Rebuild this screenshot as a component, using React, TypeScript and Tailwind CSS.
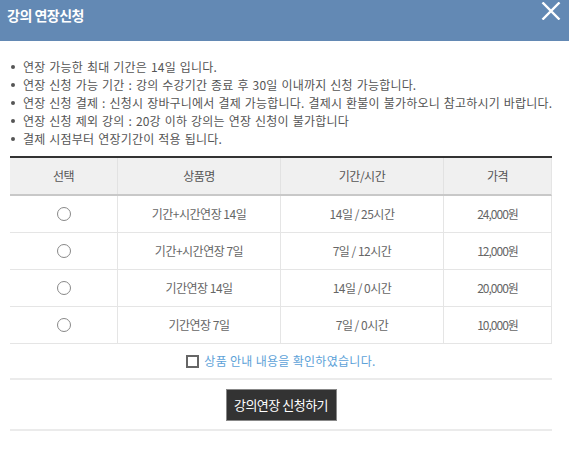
import * as React from "react";

const notices = [
  "연장 가능한 최대 기간은 14일 입니다.",
  "연장 신청 가능 기간 : 강의 수강기간 종료 후 30일 이내까지 신청 가능합니다.",
  "연장 신청 결제 : 신청시 장바구니에서 결제 가능합니다. 결제시 환불이 불가하오니 참고하시기 바랍니다.",
  "연장 신청 제외 강의 : 20강 이하 강의는 연장 신청이 불가합니다",
  "결제 시점부터 연장기간이 적용 됩니다.",
];

const products = [
  { name: "기간+시간연장 14일", period: "14일 / 25시간", price: "24,000원" },
  { name: "기간+시간연장 7일", period: "7일 / 12시간", price: "12,000원" },
  { name: "기간연장 14일", period: "14일 / 0시간", price: "20,000원" },
  { name: "기간연장 7일", period: "7일 / 0시간", price: "10,000원" },
];

const font = { fontFamily: '"Noto Sans CJK KR", "Noto Sans", sans-serif' };

export default function App() {
  const [selected, setSelected] = React.useState<number | null>(null);
  const [agreed, setAgreed] = React.useState(false);

  return (
    <div className="w-[569px] h-[449px] bg-white overflow-hidden" style={font}>
      {/* Title bar */}
      <div className="h-[41px] bg-[#6389b4] flex items-start justify-between pl-[7px] pr-[8px]">
        <h2 className="pt-[5px] text-[14px] leading-[20px] font-bold text-white tracking-[-0.5px]">
          강의 연장신청
        </h2>
        <button className="mt-[2px] w-[20px] h-[18px] text-white">
          <svg viewBox="0 0 20 18" className="w-[20px] h-[18px]" fill="none" stroke="currentColor" strokeWidth="2.4">
            <path d="M1.5 0.5 L18.5 17.5 M18.5 0.5 L1.5 17.5" />
          </svg>
        </button>
      </div>

      <div className="pl-[10px] pr-[17px]">
        {/* Notices */}
        <ul className="mt-[17px] text-[12px] leading-[18px] text-[#555] tracking-[0.2px] [word-spacing:1px]">
          {notices.map((n) => (
            <li key={n} className="flex items-center whitespace-nowrap">
              <span className="w-[4px] h-[4px] rounded-full bg-[#555] ml-[1px] mr-[8px] shrink-0" />
              {n}
            </li>
          ))}
        </ul>

        {/* Product table */}
        <div className="mt-[8px] border-t-2 border-[#333] text-[12px] tracking-[-0.5px]">
          <div className="grid grid-cols-[107px_163px_163px_1fr] h-[38px] bg-[#f0f0f0] border-b-2 border-[#c8c8c8] text-[#555] border-r border-r-[#e5e5e5]">
            <div className="flex items-center justify-center">선택</div>
            <div className="flex items-center justify-center border-l border-[#e2e2e2]">상품명</div>
            <div className="flex items-center justify-center border-l border-[#e2e2e2]">기간/시간</div>
            <div className="flex items-center justify-center border-l border-[#e2e2e2]">가격</div>
          </div>
          {products.map((p, i) => (
            <div
              key={p.name}
              className="grid grid-cols-[107px_163px_163px_1fr] h-[37px] border-b border-[#e5e5e5] border-r border-r-[#e5e5e5] text-[#666]"
            >
              <div className="flex items-center justify-center">
                <button
                  onClick={() => setSelected(i)}
                  className="w-[14px] h-[14px] rounded-full border-[1.5px] border-[#888] flex items-center justify-center"
                >
                  {selected === i && <span className="w-[6px] h-[6px] rounded-full bg-[#555]" />}
                </button>
              </div>
              <div className="flex items-center justify-center border-l border-[#e5e5e5]">{p.name}</div>
              <div className="flex items-center justify-center border-l border-[#e5e5e5]">{p.period}</div>
              <div className="flex items-center justify-center border-l border-[#e5e5e5] tracking-[-1px]">{p.price}</div>
            </div>
          ))}
        </div>

        {/* Agreement */}
        <label className="h-[36px] flex items-center justify-center gap-[5px] border-b-2 border-[#ebebeb] cursor-pointer">
          <span
            onClick={() => setAgreed(!agreed)}
            className="w-[13px] h-[13px] border-2 border-[#666] bg-white"
          />
          <span className="text-[12px] text-[#5da2d8] tracking-[0.3px]">상품 안내 내용을 확인하였습니다.</span>
        </label>

        {/* Submit */}
        <div className="pt-[9px] pb-[8px] flex justify-center border-b-2 border-[#ebebeb]">
          <button className="w-[111px] h-[32px] bg-[#333] border border-[#888] text-white text-[13px] tracking-[-0.5px]">
            강의연장 신청하기
          </button>
        </div>
      </div>
    </div>
  );
}
